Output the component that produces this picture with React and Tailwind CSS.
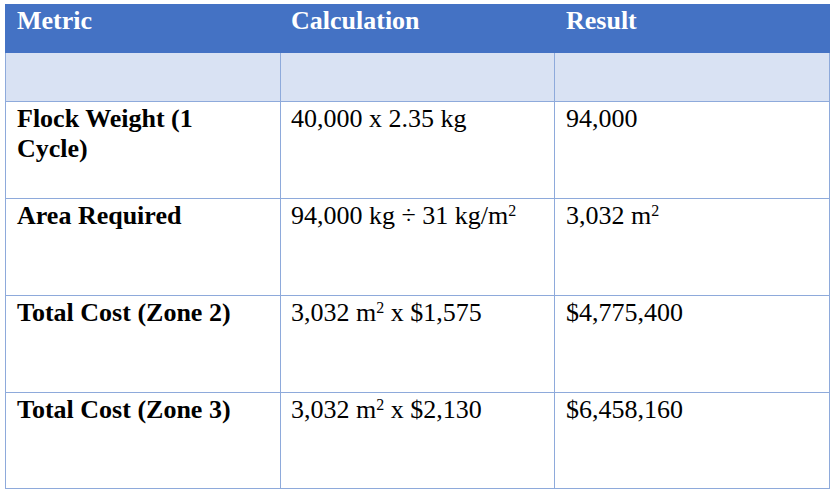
const rows = [
  { metric: 'Flock Weight (1 Cycle)', calc: '40,000 x 2.35 kg', result: '94,000', h: 'h-[97px]' },
  { metric: 'Area Required', calc: <>94,000 kg ÷ 31 kg/m<sup className="text-[16px]">2</sup></>, result: <>3,032 m<sup className="text-[16px]">2</sup></>, h: 'h-[97px]' },
  { metric: 'Total Cost (Zone 2)', calc: <>3,032 m<sup className="text-[16px]">2</sup> x $1,575</>, result: '$4,775,400', h: 'h-[97px]' },
  { metric: 'Total Cost (Zone 3)', calc: <>3,032 m<sup className="text-[16px]">2</sup> x $2,130</>, result: '$6,458,160', h: 'h-[96px]' },
];

const cols = 'grid grid-cols-[276px_274px_275px]';

export default function App() {
  return (
    <div className="min-h-[494px] w-[835px] bg-white pt-[4px] pl-[5px] font-['Liberation_Serif',serif] text-[26px] leading-[30px] text-black">
      <div className="w-[825px]">
        <div className={`${cols} h-[49px] bg-[#4472C4] font-bold text-white`}>
          <div className="px-[12px] pt-[2px]">Metric</div>
          <div className="px-[10px] pt-[2px]">Calculation</div>
          <div className="px-[11px] pt-[2px]">Result</div>
        </div>
        <div className={`${cols} h-[49px] bg-[#D9E2F3]`}>
          <div className="border-b border-l border-r border-[#8EAADB]" />
          <div className="border-b border-r border-[#8EAADB]" />
          <div className="border-b border-r border-[#8EAADB]" />
        </div>
        {rows.map((r, i) => (
          <div key={i} className={`${cols} ${r.h}`}>
            <div className="border-b border-l border-r border-[#8EAADB] px-[11px] pt-[2px] font-bold">{r.metric}</div>
            <div className="border-b border-r border-[#8EAADB] px-[10px] pt-[2px]">{r.calc}</div>
            <div className="border-b border-r border-[#8EAADB] px-[11px] pt-[2px]">{r.result}</div>
          </div>
        ))}
      </div>
    </div>
  );
}
